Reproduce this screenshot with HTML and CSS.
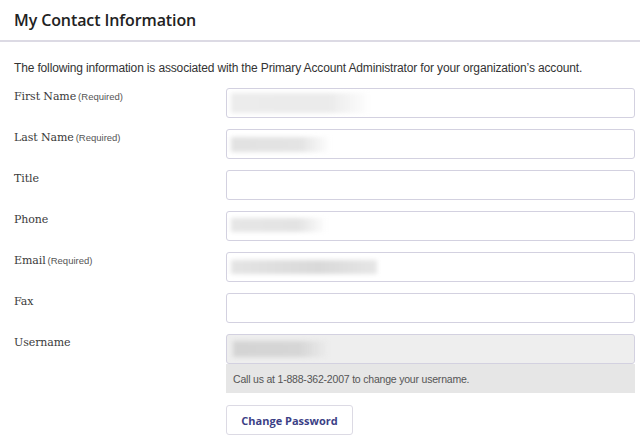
FILE: index.html
```html
<!DOCTYPE html>
<html>
<head>
<meta charset="utf-8">
<link rel="stylesheet" href="styles.css">
</head>
<body>
<header class="page-head">
  <h1 class="page-title">My Contact Information</h1>
</header>
<main class="content">
  <p class="intro">The following information is associated with the Primary Account Administrator for your organization’s account.</p>
  <form class="form">
    <div class="row">
      <label class="label">First Name<span class="req">(Required)</span></label>
      <div class="field"><div class="input"><span class="blur b1"></span></div></div>
    </div>
    <div class="row">
      <label class="label">Last Name<span class="req">(Required)</span></label>
      <div class="field"><div class="input"><span class="blur b2"></span></div></div>
    </div>
    <div class="row">
      <label class="label">Title</label>
      <div class="field"><div class="input"></div></div>
    </div>
    <div class="row">
      <label class="label">Phone</label>
      <div class="field"><div class="input"><span class="blur b3"></span></div></div>
    </div>
    <div class="row">
      <label class="label">Email<span class="req">(Required)</span></label>
      <div class="field"><div class="input"><span class="blur b4"></span></div></div>
    </div>
    <div class="row">
      <label class="label">Fax</label>
      <div class="field"><div class="input"></div></div>
    </div>
    <div class="row">
      <label class="label">Username</label>
      <div class="field">
        <div class="input disabled"><span class="blur b5"></span></div>
        <div class="help">Call us at 1-888-362-2007 to change your username.</div>
      </div>
    </div>
    <div class="row">
      <span></span>
      <div class="field"><button type="button" class="btn">Change Password</button></div>
    </div>
  </form>
</main>
</body>
</html>
```
FILE: styles.css
```css
html, body {
  margin: 0;
  padding: 0;
  background: #ffffff;
}
body {
  width: 640px;
  height: 441px;
  overflow: hidden;
  font-family: "Open Sans", "Liberation Sans", sans-serif;
  color: #333;
}
.page-head {
  height: 40px;
  border-bottom: 2px solid #dcdae4;
  padding: 0 14px;
  display: flex;
  align-items: center;
}
.page-title {
  margin: 0;
  font-size: 16px;
  font-weight: 600;
  color: #222;
  letter-spacing: -0.1px;
}
.content {
  padding: 18px 5px 0 14px;
}
.intro {
  margin: 0 0 12px;
  font-size: 12px;
  line-height: 16px;
  color: #333;
  font-family: "Liberation Sans Narrow", "Liberation Sans", sans-serif;
  letter-spacing: -0.15px;
}
.form {
  display: flex;
  flex-direction: column;
  gap: 11px;
}
.row {
  display: grid;
  grid-template-columns: 212px 1fr;
}
.label {
  font-family: "DejaVu Serif", serif;
  font-size: 11px;
  line-height: 17px;
  color: #3a3a3a;
  padding-top: 0;
  letter-spacing: -0.1px;
}
.req {
  font-family: "Liberation Sans", sans-serif;
  font-size: 9.5px;
  color: #555;
  margin-left: 2px;
  letter-spacing: 0;
}
.input {
  height: 28px;
  border: 1px solid #d3d1e0;
  border-radius: 3px;
  background: #fff;
  position: relative;
  overflow: hidden;
}
.input.disabled {
  background: #eeeeee;
}
.blur {
  position: absolute;
  top: 5px;
  left: 4px;
  height: 18px;
  filter: blur(2px);
}
.b1 { width: 140px; background: linear-gradient(90deg, #ececec 0%, #ebebeb 70%, rgba(235,235,235,0) 100%); top: 4px; height: 20px; }
.b2 { width: 100px; background: linear-gradient(90deg, #e2e2e2 0%, #e4e4e4 70%, rgba(228,228,228,0) 100%); top: 7px; height: 15px; }
.b3 { width: 96px; background: linear-gradient(90deg, #e6e6e6 0%, #e3e3e3 70%, rgba(228,228,228,0) 100%); top: 6px; height: 14px; }
.b4 { width: 146px; background: linear-gradient(90deg, #e4e4e4 0%, #d9d9d9 60%, #e6e6e6 100%); top: 7px; height: 14px; }
.b5 { width: 96px; background: linear-gradient(90deg, #d4d4d4 0%, #d6d6d6 70%, rgba(214,214,214,0) 100%); top: 6px; height: 16px; left: 6px; }
.help {
  background: #e6e6e6;
  height: 29px;
  display: flex;
  align-items: center;
  padding-left: 7px;
  font-family: "Liberation Sans Narrow", "Liberation Sans", sans-serif;
  font-size: 10.5px;
  color: #555;
  letter-spacing: -0.2px;
}
.btn {
  margin-top: 1px;
  width: 127px;
  height: 30px;
  border: 1px solid #dcdae4;
  border-radius: 3px;
  background: #fff;
  font-family: "Open Sans", "Liberation Sans", sans-serif;
  font-size: 11px;
  font-weight: 700;
  color: #3c3f86;
  padding: 0;
}
```
